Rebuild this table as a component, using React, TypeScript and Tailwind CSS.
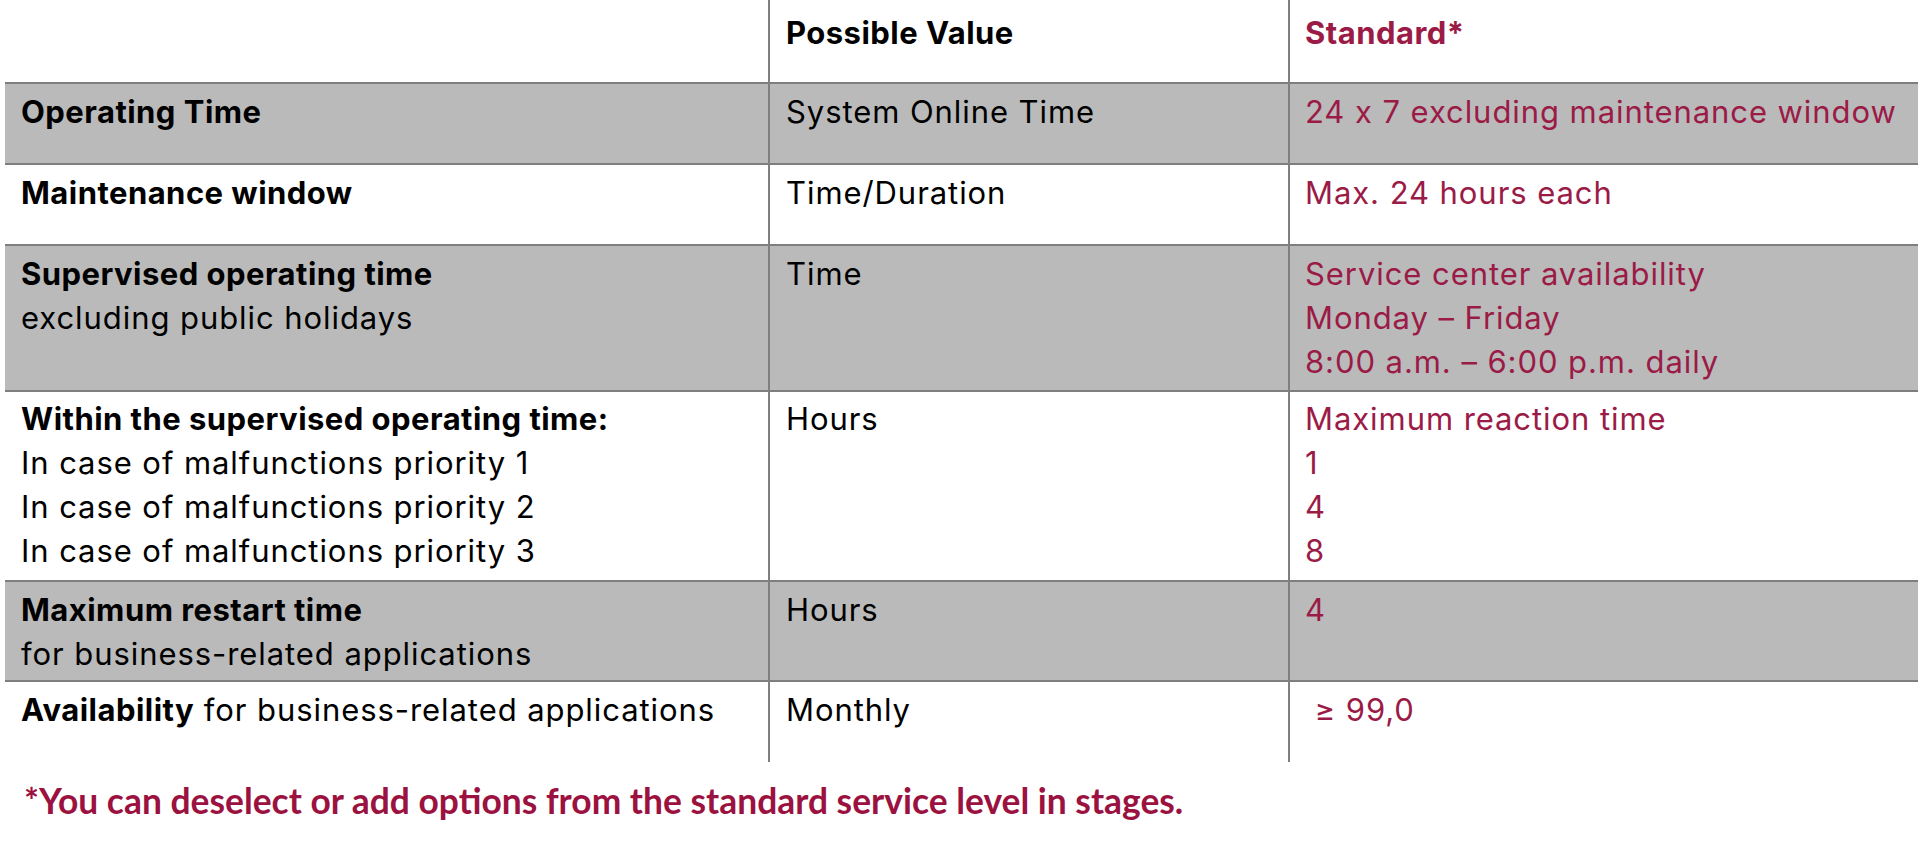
import React from "react"

type Row = {
  label: React.ReactNode
  value: string
  standard: React.ReactNode
  gray?: boolean
  h: string
  pt: string
}

const B = "font-bold tracking-[0.015em]"

const ROWS: Row[] = [
  {
    label: <div className={B}>Operating Time</div>,
    value: "System Online Time",
    standard: <div>24 x 7 excluding maintenance window</div>,
    gray: true,
    h: "h-[81px]",
    pt: "pt-[6px]",
  },
  {
    label: <div className={B}>Maintenance window</div>,
    value: "Time/Duration",
    standard: <div>Max. 24 hours each</div>,
    h: "h-[81px]",
    pt: "pt-[6px]",
  },
  {
    label: (
      <>
        <div className={B}>Supervised operating time</div>
        <div>excluding public holidays</div>
      </>
    ),
    value: "Time",
    standard: (
      <>
        <div>Service center availability</div>
        <div>Monday – Friday</div>
        <div>8:00 a.m. – 6:00 p.m. daily</div>
      </>
    ),
    gray: true,
    h: "h-[146px]",
    pt: "pt-[6px]",
  },
  {
    label: (
      <>
        <div className={B}>Within the supervised operating time:</div>
        <div>In case of malfunctions priority 1</div>
        <div>In case of malfunctions priority 2</div>
        <div>In case of malfunctions priority 3</div>
      </>
    ),
    value: "Hours",
    standard: (
      <>
        <div>Maximum reaction time</div>
        <div>1</div>
        <div>4</div>
        <div>8</div>
      </>
    ),
    h: "h-[190px]",
    pt: "pt-[5px]",
  },
  {
    label: (
      <>
        <div className={B}>Maximum restart time</div>
        <div>for business-related applications</div>
      </>
    ),
    value: "Hours",
    standard: <div>4</div>,
    gray: true,
    h: "h-[100px]",
    pt: "pt-[6px]",
  },
  {
    label: (
      <div>
        <span className={B}>Availability</span> for business-related
        applications
      </div>
    ),
    value: "Monthly",
    standard: <div>&nbsp;≥ 99,0</div>,
    h: "h-[82px]",
    pt: "pt-[6px]",
  },
]

export default function App() {
  return (
    <div className="w-[1920px] h-[846px] bg-white text-black font-['Inter',sans-serif] [font-feature-settings:'calt'_0] text-[31px] leading-[44px] tracking-[0.03em]">
      <div className="ml-[5px] w-[1913px]">
        {/* header */}
        <div className="grid grid-cols-[763px_520px_630px] h-[82px]">
          <div />
          <div className={"border-l-2 border-[#7f7f7f] pl-[16px] pt-[11px] " + B}>
            Possible Value
          </div>
          <div className={"border-l-2 border-[#7f7f7f] pl-[15px] pt-[11px] text-[#9b1b47] " + B}>
            Standard*
          </div>
        </div>

        {ROWS.map((r, i) => (
          <div
            key={i}
            className={[
              "grid grid-cols-[763px_520px_630px] border-t-2 border-[#7f7f7f]",
              r.h,
              r.gray ? "bg-[#bababa]" : "bg-white",
            ].join(" ")}
          >
            <div className={["pl-[16px]", r.pt].join(" ")}>{r.label}</div>
            <div className={["border-l-2 border-[#7f7f7f] pl-[16px]", r.pt].join(" ")}>
              {r.value}
            </div>
            <div
              className={[
                "border-l-2 border-[#7f7f7f] pl-[15px] text-[#9b1b47]",
                r.pt,
              ].join(" ")}
            >
              {r.standard}
            </div>
          </div>
        ))}
      </div>

      <div className="mt-[18px] pl-[24px] font-['Lato',sans-serif] font-bold text-[35.4px] leading-[42px] tracking-normal text-[#9b1240]">
        *You can deselect or add options from the standard service level in stages.
      </div>
    </div>
  )
}
